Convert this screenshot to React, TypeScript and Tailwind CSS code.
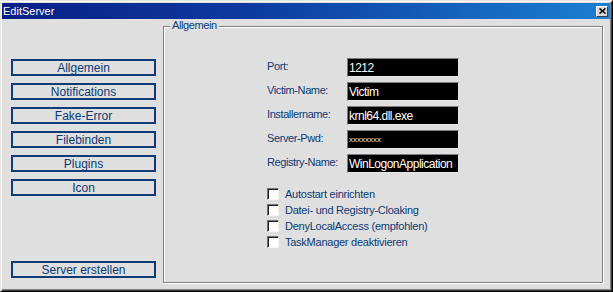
import React from "react";

const navy = "text-[#0a3a78]";

function NavButton({ label }: { label: string }) {
  return (
    <div
      className={`w-[145px] h-[17px] border-2 border-[#0d3c78] flex items-center justify-center text-[12px] leading-none ${navy}`}
    >
      {label}
    </div>
  );
}

function Field({ label, value, small }: { label: string; value: string; small?: boolean }) {
  return (
    <div className="flex h-[19px]">
      <div className={`w-[80px] h-[19px] flex items-center pb-[3px] text-[11px] tracking-[-0.4px] leading-none ${navy}`}>
        {label}
      </div>
      <div className="w-[112px] h-[19px] border border-t-[#7a7a7a] border-l-[#7a7a7a] border-b-[#e8e8e8] border-r-[#e8e8e8] bg-black flex items-center pl-[1px]">
        {small ? (
          <span className="text-[#e8e8e8] text-[8px] leading-none">xxxxxxxx</span>
        ) : (
          <span className="text-white text-[12px] tracking-[-0.5px] leading-none">{value}</span>
        )}
      </div>
    </div>
  );
}

function Check({ label }: { label: string }) {
  return (
    <div className="flex items-center h-[16px]">
      <div className="w-[12px] h-[12px] bg-white border border-t-[#707070] border-l-[#707070] border-b-[#f4f4f4] border-r-[#f4f4f4] shadow-[inset_1px_1px_0_#202020]" />
      <span className={`ml-[6px] text-[11px] tracking-[-0.25px] leading-none ${navy}`}>{label}</span>
    </div>
  );
}

export default function App() {
  return (
    <div className="w-[613px] h-[292px] font-['Liberation_Sans',Arial,sans-serif] border border-t-[#e4e4e4] border-l-[#e4e4e4] border-r-black border-b-black bg-[#dfdfdf]">
      <div className="w-full h-full border border-t-white border-l-white border-r-[#404040] border-b-[#404040] flex flex-col">
        <div className="w-full h-full border-b border-r border-b-[#808080] border-r-[#808080] flex flex-col pt-[1px]">
          {/* Title bar */}
          <div className="h-[16px] flex items-center justify-between bg-[linear-gradient(90deg,#0a1f86_0%,#0c3aa0_40%,#1a7fd2_100%)] pl-[1px] pr-[2px]">
            <span className="text-white text-[11px] leading-none">EditServer</span>
            <div className="w-[12px] h-[11px] bg-[#d8d8d8] border border-t-white border-l-white border-b-[#404040] border-r-[#404040] flex items-center justify-center">
              <svg width="7" height="6" viewBox="0 0 7 6">
                <path d="M0.5 0.5 L6.5 5.5 M6.5 0.5 L0.5 5.5" stroke="black" strokeWidth="1.6" />
              </svg>
            </div>
          </div>
          {/* Body */}
          <div className="flex-1 flex">
            <div className="w-[161px] flex flex-col pl-[9px] pt-[40px] pb-[11px]">
              <div className="flex flex-col gap-[7px]">
                <NavButton label="Allgemein" />
                <NavButton label="Notifications" />
                <NavButton label="Fake-Error" />
                <NavButton label="Filebinden" />
                <NavButton label="Plugins" />
                <NavButton label="Icon" />
              </div>
              <div className="mt-auto">
                <NavButton label="Server erstellen" />
              </div>
            </div>
            <div className="mt-[7px] w-[440px] h-[257px] border border-[#808080] shadow-[inset_1px_1px_0_#ffffff,1px_1px_0_#ffffff] relative pl-[103px] pt-[31px]">
              <div className={`absolute left-[6px] top-[-7px] px-[2px] bg-[#dfdfdf] text-[11px] tracking-[-0.4px] leading-none ${navy}`}>
                Allgemein
              </div>
              <div className="flex flex-col gap-[5px]">
                <Field label="Port:" value="1212" />
                <Field label="Victim-Name:" value="Victim" />
                <Field label="Installername:" value="krnl64.dll.exe" />
                <Field label="Server-Pwd:" value="" small />
                <Field label="Registry-Name:" value="WinLogonApplication" />
              </div>
              <div className="mt-[13px] flex flex-col">
                <Check label="Autostart einrichten" />
                <Check label="Datei- und Registry-Cloaking" />
                <Check label="DenyLocalAccess (empfohlen)" />
                <Check label="TaskManager deaktivieren" />
              </div>
            </div>
          </div>
        </div>
      </div>
    </div>
  );
}
